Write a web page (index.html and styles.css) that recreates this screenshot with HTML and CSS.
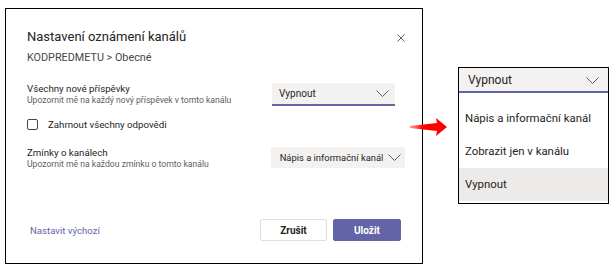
FILE: index.html
```html
<!DOCTYPE html>
<html lang="cs">
<head>
<meta charset="utf-8">
<link rel="stylesheet" href="styles.css">
</head>
<body>
<div class="canvas">
  <section class="dialog">
    <header class="dlg-head">
      <h1 class="dlg-title">Nastavení oznámení kanálů</h1>
      <svg class="close" viewBox="0 0 8 8" width="8" height="8"><path d="M0.5 0.5 L7.5 7.5 M7.5 0.5 L0.5 7.5" stroke="#605e5c" stroke-width="1" fill="none"/></svg>
    </header>
    <div class="crumb">KODPREDMETU &gt; Obecné</div>

    <div class="setting first">
      <div class="labels">
        <div class="lbl">Všechny nové příspěvky</div>
        <div class="sub">Upozornit mě na každý nový příspěvek v tomto kanálu</div>
      </div>
      <div class="select active">
        <span>Vypnout</span>
        <svg class="chev" viewBox="0 0 13 7" width="13" height="7"><path d="M0.5 0.5 L6.5 6.5 L12.5 0.5" stroke="#605e5c" stroke-width="1" fill="none"/></svg>
      </div>
    </div>

    <label class="check">
      <span class="box"></span>
      <span>Zahrnout všechny odpovědi</span>
    </label>

    <div class="setting second">
      <div class="labels">
        <div class="lbl">Zmínky o kanálech</div>
        <div class="sub">Upozornit mě na každou zmínku o tomto kanálu</div>
      </div>
      <div class="select wide">
        <span>Nápis a informační kanál</span>
        <svg class="chev" viewBox="0 0 13 7" width="13" height="7"><path d="M0.5 0.5 L6.5 6.5 L12.5 0.5" stroke="#605e5c" stroke-width="1" fill="none"/></svg>
      </div>
    </div>

    <footer class="dlg-foot">
      <a class="link">Nastavit výchozí</a>
      <div class="buttons">
        <button class="btn secondary">Zrušit</button>
        <button class="btn primary">Uložit</button>
      </div>
    </footer>
  </section>

  <div class="panel">
    <div class="panel-head">
      <span>Vypnout</span>
      <svg class="chev" viewBox="0 0 13 7" width="13" height="7"><path d="M0.5 0.5 L6.5 6.5 L12.5 0.5" stroke="#605e5c" stroke-width="1" fill="none"/></svg>
    </div>
    <ul class="options">
      <li>Nápis a informační kanál</li>
      <li>Zobrazit jen v kanálu</li>
      <li class="selected">Vypnout</li>
    </ul>
  </div>

  <svg class="arrow" viewBox="0 0 40 20" width="40" height="20">
    <defs>
      <linearGradient id="tail" x1="0" x2="1" y1="0" y2="0">
        <stop offset="0" stop-color="#ff3030" stop-opacity="0.5"/>
        <stop offset="0.35" stop-color="#f00"/>
        <stop offset="1" stop-color="#f00"/>
      </linearGradient>
    </defs>
    <polygon points="1,9 28,6 27,1 38,10 27,19 28,14 1,11" fill="url(#tail)"/>
  </svg>
</div>
</body>
</html>
```

FILE: styles.css
```css
* { box-sizing: border-box; }
html, body { margin: 0; padding: 0; background: #fff; }
body {
  font-family: Roboto, "Noto Sans", sans-serif;
  color: #252423;
}
.canvas {
  position: relative;
  width: 616px;
  height: 266px;
  display: flex;
  align-items: flex-start;
}
.dialog {
  margin: 8px 0 0 5px;
  width: 418px;
  height: 256px;
  border: 1px solid #000;
  padding: 18px 17px 22px 21px;
  display: flex;
  flex-direction: column;
}
.dlg-head {
  display: flex;
  align-items: center;
  justify-content: space-between;
}
.dlg-title {
  margin: 0;
  font-size: 13px;
  font-weight: 400;
  line-height: 20px;
  color: #252423;
}
.close { margin-top: 1px; }
.crumb {
  margin-top: 4px;
  font-size: 10.8px;
  line-height: 14px;
  color: #484644;
}
.setting {
  display: flex;
  align-items: flex-start;
}
.setting.first { margin-top: 17px; }
.setting.second { margin-top: 15px; }
.labels { width: 245px; }
.lbl {
  font-size: 9.7px;
  line-height: 13px;
  color: #252423;
}
.sub {
  font-size: 8.6px;
  line-height: 11px;
  color: #605e5c;
  white-space: nowrap;
}
.select {
  margin-top: 1px;
  height: 23px;
  background: #f3f2f1;
  border-radius: 2px;
  display: flex;
  align-items: center;
  justify-content: space-between;
  padding: 0 6px 0 7px;
  font-size: 10px;
  color: #252423;
  white-space: nowrap;
}
.select.active {
  width: 123px;
  border-bottom: 2px solid #6264a7;
  border-radius: 2px 2px 0 0;
}
.select.wide {
  width: 135px;
  height: 21px;
  padding: 0 4px 0 9px;
  font-size: 9.4px;
}
.check {
  margin-top: 12px;
  display: flex;
  align-items: center;
  font-size: 9.7px;
  line-height: 13px;
  color: #252423;
}
.box {
  width: 11px;
  height: 11px;
  border: 1px solid #484644;
  border-radius: 2px;
  margin-right: 10px;
}
.dlg-foot {
  margin-top: auto;
  display: flex;
  align-items: center;
  justify-content: space-between;
  padding-right: 4px;
}
.link {
  padding-left: 3px;
  font-size: 9.6px;
  color: #6264a7;
}
.buttons { display: flex; gap: 6px; }
.btn {
  height: 22px;
  width: 67px;
  font-family: inherit;
  font-size: 10px;
  font-weight: 700;
  border-radius: 2px;
  padding: 0;
}
.btn.secondary {
  background: #fff;
  border: 1px solid #e1dfdd;
  color: #252423;
}
.btn.primary {
  width: 68px;
  background: #6264a7;
  border: 1px solid #6264a7;
  color: #fff;
}
.panel {
  margin: 67px 0 0 35px;
  width: 151px;
  height: 137px;
  border: 1px solid #000;
  background: #fff;
}
.panel-head {
  height: 25px;
  background: #f3f2f1;
  border-bottom: 2px solid #6264a7;
  display: flex;
  align-items: center;
  justify-content: space-between;
  padding: 1px 9px 0 9px;
  font-size: 12px;
}
.options {
  list-style: none;
  margin: 0;
  padding: 9px 0 0 0;
}
.options li {
  height: 33px;
  line-height: 33px;
  padding-left: 6px;
  font-size: 11.4px;
  color: #252423;
  white-space: nowrap;
}
.options li.selected { background: #edebe9; }
.arrow {
  position: absolute;
  left: 409px;
  top: 117px;
}
```
